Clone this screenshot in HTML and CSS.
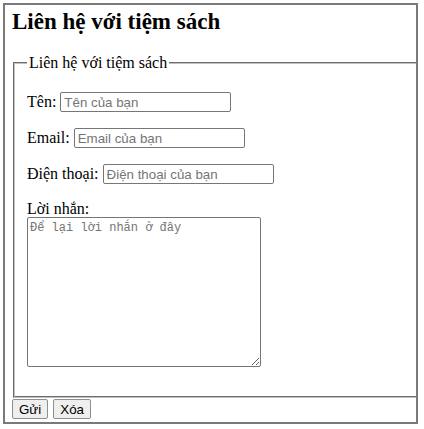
FILE: index.html
```html
<!DOCTYPE html>
<html lang="vi">
<head>
    <meta charset="UTF-8">
    <meta name="viewport" content="width=device-width, initial-scale=1.0">
    <title>Liên hệ với tiệm sách</title>
    <link rel="stylesheet" href="styles.css">
</head>
<body>
    <!-- Khung liên hệ -->
    <div class="contact">
        <h1>Liên hệ với tiệm sách</h1>

        <form>
            <fieldset>
                <legend>Liên hệ với tiệm sách</legend>

                <p>
                    <label for="ten">Tên:</label>
                    <input type="text" id="ten" placeholder="Tên của bạn">
                </p>
                <p>
                    <label for="email">Email:</label>
                    <input type="text" id="email" placeholder="Email của bạn">
                </p>
                <p>
                    <label for="dienthoai">Điện thoại:</label>
                    <input type="text" id="dienthoai" placeholder="Điện thoại của bạn">
                </p>
                <p>
                    <label for="loinhan">Lời nhắn:</label><br>
                    <textarea id="loinhan" placeholder="Để lại lời nhắn ở đây"></textarea>
                </p>
            </fieldset>

            <div class="actions">
                <button type="submit" class="btn">Gửi</button>
                <button type="reset" class="btn">Xóa</button>
            </div>
        </form>
    </div>
</body>
</html>
```

FILE: styles.css
```css
* {
    box-sizing: border-box;
}
body {
    margin: 0;
    padding: 3px 6px 6px 3px;
    font-family: 'Liberation Serif', 'Times New Roman', serif;
    font-size: 16px;
    color: #000;
    background: #fff;
}
.contact {
    border: 2px solid #7a7a7a;
    padding: 3px 0 4px 7px;
    height: 421px;
}
h1 {
    font-size: 23px;
    font-weight: bold;
    margin: 0 0 18px 0;
    line-height: 28px;
}
fieldset {
    margin: 0 0 0 1px;
    padding: 4px 12px 13px 12px;
    border: 2px groove #c0c0c0;
    border-right: none;
}
legend {
    padding: 0 2px;
}
fieldset p {
    margin: 16px 0;
}
input[type="text"] {
    width: 171px;
    height: 20px;
    padding: 1px 3px;
    border: 1px solid #767676;
    border-radius: 2px;
    font-family: 'Liberation Sans', Arial, sans-serif;
    font-size: 13.33px;
}
input::placeholder,
textarea::placeholder {
    color: #757575;
}
textarea {
    width: 234px;
    height: 150px;
    margin-top: -1px;
    padding: 3px 2px;
    border: 1px solid #767676;
    border-radius: 2px;
    font-family: 'Liberation Mono', 'Courier New', monospace;
    font-size: 12px;
    vertical-align: bottom;
}
.actions {
    margin-top: 1px;
    display: flex;
    gap: 5px;
}
.btn {
    padding: 1px 6px;
    height: 20px;
    border: 1px solid #8f8f8f;
    border-radius: 2px;
    background: #efefef;
    font-family: 'Liberation Sans', Arial, sans-serif;
    font-size: 13.33px;
    color: #000;
}
```
